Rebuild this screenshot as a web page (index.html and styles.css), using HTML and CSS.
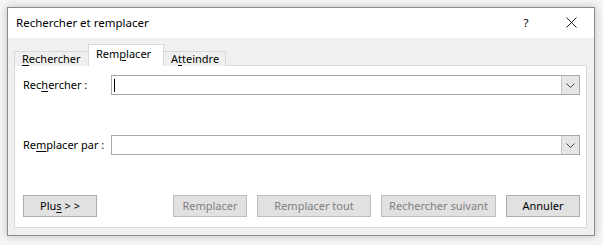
FILE: index.html
```html
<!DOCTYPE html>
<html lang="fr">
<head>
  <meta charset="UTF-8">
  <title>Rechercher et remplacer</title>
  <link rel="stylesheet" href="styles.css">
</head>
<body>
  <div class="dialog">
    <div class="titlebar">
      <span class="title">Rechercher et remplacer</span>
      <span class="help">?</span>
      <span class="close">
        <svg width="11" height="11" viewBox="0 0 11 11"><path d="M0.5 0.5L10.5 10.5M10.5 0.5L0.5 10.5" stroke="#222" stroke-width="1"/></svg>
      </span>
    </div>

    <div class="content">
      <div class="tabs">
        <div class="tab first"><u>R</u>echercher</div>
        <div class="tab active">Rem<u>p</u>lacer</div>
        <div class="tab last">A<u>t</u>teindre</div>
      </div>

      <div class="panel">
        <div class="field">
          <label>Rec<u>h</u>ercher :</label>
          <div class="combo">
            <span class="caret"></span>
            <span class="drop">
              <svg width="9" height="5" viewBox="0 0 9 5"><path d="M0.5 0.5L4.5 4.5L8.5 0.5" fill="none" stroke="#444" stroke-width="1"/></svg>
            </span>
          </div>
        </div>

        <div class="field">
          <label>Re<u>m</u>placer par :</label>
          <div class="combo">
            <span class="drop">
              <svg width="9" height="5" viewBox="0 0 9 5"><path d="M0.5 0.5L4.5 4.5L8.5 0.5" fill="none" stroke="#444" stroke-width="1"/></svg>
            </span>
          </div>
        </div>

        <div class="buttons">
          <button class="btn w74">Plu<u>s</u> &gt; &gt;</button>
          <div class="spacer"></div>
          <button class="btn w74" disabled>Remplacer</button>
          <button class="btn w114" disabled>Remplacer tout</button>
          <button class="btn w115" disabled>Rechercher suivant</button>
          <button class="btn w74">Annuler</button>
        </div>
      </div>
    </div>
  </div>
</body>
</html>
```

FILE: styles.css
```css
body {
  margin: 0;
  padding: 7px;
  background-color: #f5f5f5;
  font-family: 'Noto Sans', 'Segoe UI', sans-serif;
  font-size: 11px;
  color: #000;
}

u {
  text-decoration-thickness: 1px;
  text-underline-offset: 2px;
}

.dialog {
  width: 586px;
  height: 227px;
  border: 1px solid #8a8a8a;
  background-color: #f0f0f0;
  box-shadow: 0 0 8px rgba(0, 0, 0, 0.22);
  display: flex;
  flex-direction: column;
}

.titlebar {
  flex-shrink: 0;
  height: 30px;
  background-color: #fff;
  display: flex;
  align-items: center;
  padding-left: 8px;
  font-size: 11.5px;
}

.title {
  flex: 1;
  padding-bottom: 2px;
}

.help {
  width: 20px;
  text-align: center;
  margin-right: 30px;
  padding-bottom: 2px;
}

.close {
  width: 11px;
  display: flex;
  margin-right: 17px;
  margin-bottom: 1px;
}

.content {
  flex: 1;
  min-height: 0;
  padding: 7px 7px 7px 6px;
  display: flex;
  flex-direction: column;
}

.tabs {
  flex-shrink: 0;
  display: flex;
  align-items: flex-end;
  height: 21px;
  position: relative;
  z-index: 1;
  margin-bottom: -1px;
}

.tab {
  height: 14px;
  line-height: 13px;
  padding: 0 7px;
  border: 1px solid #d9d9d9;
  border-bottom: none;
  background-color: #f0f0f0;
  margin-right: -1px;
  white-space: nowrap;
}

.tab.first {
  width: 59px;
}

.tab.active {
  height: 20px;
  line-height: 18px;
  width: 60px;
  background-color: #fff;
  padding-bottom: 1px;
}

.tab.last {
  width: 47px;
}

.panel {
  flex: 1;
  background-color: #fff;
  border: 1px solid #d9d9d9;
  padding: 9px 6px 9px 8px;
  display: flex;
  flex-direction: column;
  gap: 40px;
}

.field {
  display: flex;
  align-items: center;
}

.field label {
  width: 88px;
  flex-shrink: 0;
  white-space: nowrap;
  padding-bottom: 2px;
}

.combo {
  flex: 1;
  height: 18px;
  border: 1px solid #a9a9a9;
  display: flex;
  align-items: center;
  justify-content: flex-end;
  position: relative;
}

.caret {
  position: absolute;
  left: 2px;
  top: 3px;
  width: 1px;
  height: 13px;
  background-color: #000;
}

.drop {
  width: 17px;
  height: 18px;
  background-color: #e6e6e6;
  border-left: 1px solid #c4c4c4;
  display: flex;
  align-items: center;
  justify-content: center;
}

.buttons {
  display: flex;
  gap: 10px;
}

.spacer {
  flex: 1;
}

.btn {
  height: 22px;
  font-family: inherit;
  font-size: 11px;
  color: #000;
  background-color: #e1e1e1;
  border: 1px solid #adadad;
  padding: 0 0 2px 0;
  white-space: nowrap;
}

.btn:disabled {
  color: #7f7f7f;
  border-color: #bfbfbf;
}

.w74 {
  width: 74px;
}

.w114 {
  width: 114px;
}

.w115 {
  width: 115px;
}
```
